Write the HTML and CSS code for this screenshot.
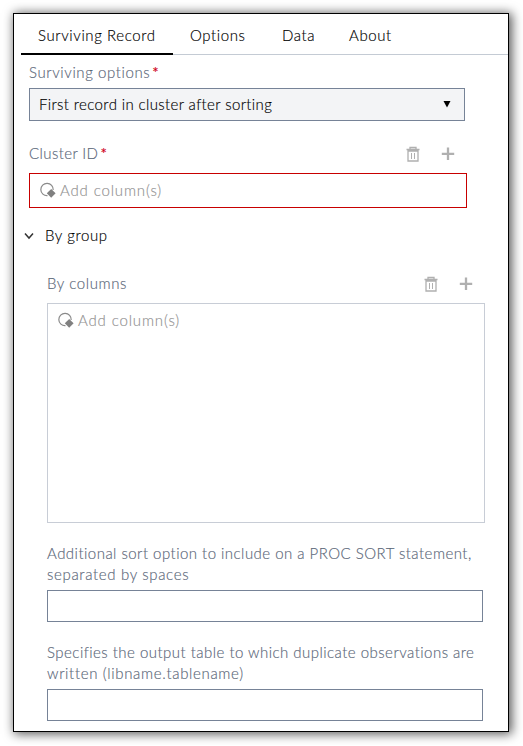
FILE: index.html
```html
<!DOCTYPE html>
<html lang="en">
<head>
<meta charset="utf-8">
<title>Surviving Record</title>
<link rel="stylesheet" href="styles.css">
</head>
<body>
<svg class="symbols" aria-hidden="true">
  <symbol id="trash" viewBox="0 0 14 16">
    <path d="M0.5 3.5h13M4 3V1.5h6V3M2 5h10v10H2z" fill="none" stroke="#b0b0b0" stroke-width="1.3"/>
    <path d="M5.5 7v6M8.5 7v6" fill="none" stroke="#b0b0b0"/>
  </symbol>
  <symbol id="plus" viewBox="0 0 14 14">
    <path d="M7 .6v12.4M.8 6.8h12.4" fill="none" stroke="#b0b0b0" stroke-width="2.3"/>
  </symbol>
  <symbol id="column" viewBox="0 0 16 16">
    <path d="M7.5 13.7A6.2 6.2 0 1 1 13.2 8" fill="none" stroke="#8a8a8a" stroke-width="1.2"/>
    <path d="M11.2 7l4.4 4.3-4.4 4.4-4.4-4.4z" fill="#808080"/>
  </symbol>
</svg>
<main class="panel">
  <nav class="tabs">
    <a class="tab active">Surviving Record</a>
    <a class="tab options">Options</a>
    <a class="tab data">Data</a>
    <a class="tab">About</a>
  </nav>
  <section class="fields">
    <div class="label first">Surviving options<span class="required">*</span></div>
    <div class="select"><span>First record in cluster after sorting</span>
      <svg class="arrow" viewBox="0 0 8 7"><path d="M.5 0h7L4 6.5z"/></svg>
    </div>
    <div class="heading">
      <div class="label cluster">Cluster ID<span class="required">*</span></div>
      <svg class="trash"><use href="#trash"/></svg>
      <svg class="plus"><use href="#plus"/></svg>
    </div>
    <div class="columns invalid"><svg class="column-icon"><use href="#column"/></svg><span>Add column(s)</span></div>
  </section>
  <div class="group-title">
    <svg class="chevron" viewBox="0 0 10 8"><path d="M1 1.5l4 4.5 4-4.5" fill="none" stroke="#333" stroke-width="1.5"/></svg>
    <span>By group</span>
  </div>
  <section class="group">
    <div class="heading">
      <div class="label">By columns</div>
      <svg class="trash"><use href="#trash"/></svg>
      <svg class="plus"><use href="#plus"/></svg>
    </div>
    <div class="columns list"><svg class="column-icon"><use href="#column"/></svg><span>Add column(s)</span></div>
    <div class="label long">Additional sort option to include on a PROC SORT statement,<br><span class="wide">separated by spaces</span></div>
    <div class="input"></div>
    <div class="label long">Specifies the output table to which duplicate observations are<br><span class="wide">written (libname.tablename)</span></div>
    <div class="input"></div>
  </section>
</main>
</body>
</html>
```
FILE: styles.css
```css
* { box-sizing: border-box; }
body {
  margin: 0;
  padding: 13px;
  background: #fff;
  font: 300 15px/21px Lato, "Liberation Sans", sans-serif;
  letter-spacing: 0.6px;
  -webkit-text-stroke: 0.15px currentColor;
  color: #000;
}
svg { display: block; flex: none; }
.symbols { position: absolute; width: 0; height: 0; }
.panel {
  width: 496px;
  height: 719px;
  border: 1px solid #000;
  background: #fff;
  box-shadow: 2px 1px 10px 1px rgba(0, 0, 0, 0.65);
}
.tabs {
  display: flex;
  height: 41px;
  margin-left: 7px;
  border-bottom: 1px solid #c4cbd4;
}
.tab { height: 41px; padding: 11px 0 0 17px; white-space: nowrap; }
.tab.active { width: 152px; border-bottom: 2px solid #000; }
.tab.options { width: 92px; }
.tab.data { width: 67px; }
.fields { padding-left: 15px; }
.label { color: #5b6779; white-space: nowrap; }
.label.first { padding-top: 7px; height: 33px; }
.label.cluster { letter-spacing: 0.4px; }
.required { color: #d0021b; margin-left: 2px; font-weight: 400; }
.select {
  display: flex;
  align-items: center;
  justify-content: space-between;
  width: 436px;
  height: 33px;
  padding: 0 13px 0 9px;
  border: 1px solid #768397;
  background: #f3f4f6;
  letter-spacing: 0.38px;
}
.arrow { width: 8px; height: 7px; margin-top: -1px; }
.heading { display: flex; align-items: center; width: 426px; height: 52px; padding-top: 13px; }
.heading .label { flex: 1; }
.trash { width: 14px; height: 16px; margin-right: 21px; }
.plus { width: 14px; height: 14px; margin-right: 0; }
.columns {
  display: flex;
  width: 438px;
  color: #929292;
  letter-spacing: 0.85px;
  border: 1px solid #c8cdd6;
  padding: 6px 10px;
}
.columns.invalid { height: 35px; border-color: #c80000; }
.columns.list { height: 220px; }
.column-icon { width: 16px; height: 16px; margin: 2px 4px 0 0; }
.group-title { display: flex; align-items: center; height: 56px; padding: 0 0 1px 10px; }
.chevron { width: 10px; height: 8px; margin-right: 11px; }
.group { padding-left: 33px; }
.group .heading { height: 39px; padding-top: 0; }
.label.long { padding-top: 20px; height: 67px; letter-spacing: 0.47px; }
.label .wide { letter-spacing: 0.66px; }
.input { width: 436px; height: 32px; border: 1px solid #768397; }
```
